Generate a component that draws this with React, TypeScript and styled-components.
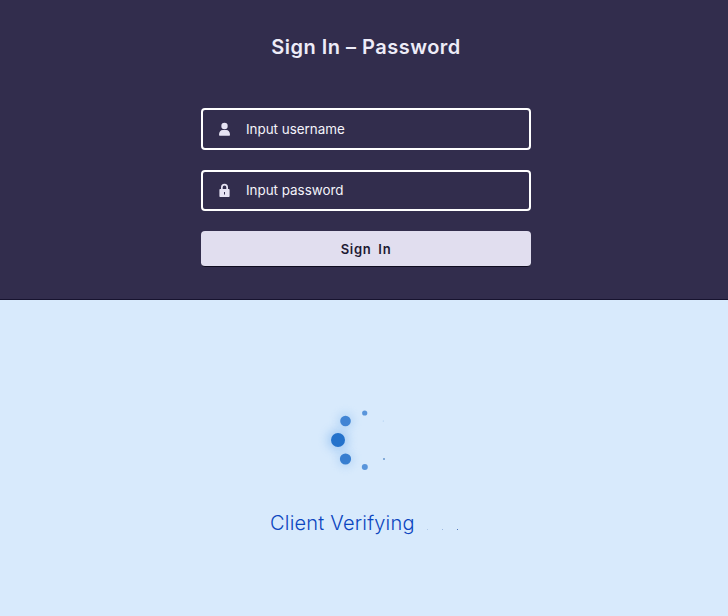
import React from 'react';
import styled, { createGlobalStyle } from 'styled-components';

const GlobalStyle = createGlobalStyle`
  html, body {
    margin: 0;
    padding: 0;
    background: #d8eafc;
  }
  * {
    box-sizing: border-box;
  }
  body {
    font-family: Inter, "Liberation Sans", sans-serif;
  }
`;

const Page = styled.div`
  width: 728px;
  height: 616px;
  display: flex;
  flex-direction: column;
  overflow: hidden;
`;

const SignInPanel = styled.section`
  height: 300px;
  background: #322d4d;
  border-bottom: 1px solid #17132f;
  display: flex;
  flex-direction: column;
  align-items: center;
  padding: 35px 0 0 4px;
`;

const Title = styled.h1`
  margin: 0 0 49px;
  font-size: 20px;
  line-height: 24px;
  font-weight: 600;
  letter-spacing: 0.5px;
  color: #eeecf8;
`;

const Form = styled.form`
  width: 330px;
  display: flex;
  flex-direction: column;
  gap: 20px;
`;

const Field = styled.label`
  height: 41.5px;
  border: 2px solid #fff;
  border-radius: 4px;
  display: flex;
  align-items: center;
  gap: 15px;
  padding-left: 15px;
  background: #322d4d;
  color: #e6e3f3;
`;

const FieldIcon = styled.svg`
  width: 13px;
  height: 14px;
  flex: none;
  fill: currentColor;
`;

const Input = styled.input`
  flex: 1;
  min-width: 0;
  border: 0;
  outline: 0;
  padding: 0;
  background: transparent;
  font: 400 13.4px/20px Inter, "Liberation Sans", sans-serif;
  color: #fff;

  &::placeholder {
    color: #f4f3fa;
    opacity: 1;
  }
`;

const SubmitButton = styled.button`
  height: 36px;
  border: 0;
  border-bottom: 1px solid #0f0c20;
  border-radius: 4px;
  background: #e1deef;
  color: #1d1933;
  font: 600 13px/16px Inter, "Liberation Sans", sans-serif;
  letter-spacing: 0.7px;
  word-spacing: 3px;
`;

const VerifyPanel = styled.section`
  flex: 1;
  background: #d8eafc;
  display: flex;
  flex-direction: column;
  align-items: center;
  padding-top: 100px;
`;

const Spinner = styled.svg`
  width: 80px;
  height: 80px;
  flex: none;
  overflow: visible;
  margin-right: 8px;
`;

const StatusRow = styled.div`
  margin-top: 31px;
  width: 188px;
  display: flex;
  align-items: center;
  color: #0c46c0;
`;

const StatusText = styled.span`
  font-size: 20px;
  line-height: 24px;
  font-weight: 300;
  letter-spacing: 0.2px;
  white-space: nowrap;
`;

const Ellipsis = styled.span`
  display: flex;
  gap: 13.5px;
  margin-left: 12px;
  padding-top: 13px;
`;

const EllipsisDot = styled.i<{ $alpha: number }>`
  width: 1.5px;
  height: 1.5px;
  border-radius: 50%;
  background: #0f3f9c;
  opacity: ${(p) => p.$alpha};
`;

const dots = [
  { x: 18, y: 40, r: 7, o: 1, c: '#2472cb' },
  { x: 25.5, y: 21, r: 5.3, o: 0.95, c: '#3a80d2' },
  { x: 25.5, y: 59, r: 5.6, o: 0.95, c: '#3079cd' },
  { x: 44.7, y: 13, r: 2.6, o: 0.8, c: '#3a80d2' },
  { x: 44.8, y: 67, r: 3, o: 0.8, c: '#3a80d2' },
  { x: 63.3, y: 21, r: 0.6, o: 0.3, c: '#3a80d2' },
  { x: 64, y: 59, r: 0.8, o: 1, c: '#1a5fb0' },
];

export default function App() {
  return (
    <Page>
      <GlobalStyle />
      <SignInPanel>
        <Title>Sign In – Password</Title>
        <Form onSubmit={(e) => e.preventDefault()}>
          <Field>
            <FieldIcon viewBox="0 0 13 14">
              <circle cx="6.5" cy="4" r="3.2" />
              <path d="M1 13c0-3.400 1.800-5 3.600-5h3.800c1.800 0 3.600 1.600 3.600 5 0 .5-.3.800-.8.800H1.800C1.300 13.800 1 13.500 1 13z" />
            </FieldIcon>
            <Input placeholder="Input username" />
          </Field>
          <Field>
            <FieldIcon viewBox="0 0 13 14">
              <path
                fillRule="evenodd"
                d="M3 6V4.200a3.500 3.500 0 0 1 7 0V6h.6c.6 0 1 .4 1 1v6c0 .6-.4 1-1 1H2.400c-.6 0-1-.4-1-1V7c0-.6.4-1 1-1H3zm1.700 0h3.600V4.200a1.800 1.800 0 0 0-3.600 0V6zM6 9v2.500h1V9H6z"
              />
            </FieldIcon>
            <Input placeholder="Input password" type="password" />
          </Field>
          <SubmitButton type="submit">Sign In</SubmitButton>
        </Form>
      </SignInPanel>
      <VerifyPanel>
        <Spinner viewBox="0 0 80 80">
          <defs>
            <filter id="glow" x="-200%" y="-200%" width="500%" height="500%">
              <feGaussianBlur stdDeviation="5" />
            </filter>
          </defs>
          <circle cx="18" cy="40" r="11" fill="#6aa8ea" opacity="0.4" filter="url(#glow)" />
          <circle cx="25.5" cy="21" r="8" fill="#6aa8ea" opacity="0.3" filter="url(#glow)" />
          <circle cx="25.5" cy="59" r="8" fill="#6aa8ea" opacity="0.3" filter="url(#glow)" />
          {dots.map((d) => (
            <circle key={`${d.x}-${d.y}`} cx={d.x} cy={d.y} r={d.r} fill={d.c} opacity={d.o} />
          ))}
        </Spinner>
        <StatusRow>
          <StatusText>Client Verifying</StatusText>
          <Ellipsis>
            <EllipsisDot $alpha={0.25} />
            <EllipsisDot $alpha={0.4} />
            <EllipsisDot $alpha={0.9} />
          </Ellipsis>
        </StatusRow>
      </VerifyPanel>
    </Page>
  );
}
